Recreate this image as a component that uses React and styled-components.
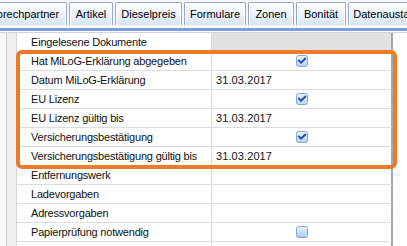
import React from "react";
import styled, { createGlobalStyle } from "styled-components";

const Global = createGlobalStyle`
  html, body { margin: 0; padding: 0; background: #ffffff; }
  body { font-family: "Liberation Sans", Arial, sans-serif; font-size: 11px; color: #111; }
`;

const tabs = [
  { label: "Ansprechpartner", width: 97 },
  { label: "Artikel", width: 44 },
  { label: "Dieselpreis", width: 67 },
  { label: "Formulare", width: 62 },
  { label: "Zonen", width: 46 },
  { label: "Bonität", width: 50 },
  { label: "Datenaustausch", width: 90 },
];

const rows = [
  { label: "Eingelesene Dokumente", kind: "head" },
  { label: "Hat MiLoG-Erklärung abgegeben", kind: "check", checked: true },
  { label: "Datum MiLoG-Erklärung", kind: "text", value: "31.03.2017" },
  { label: "EU Lizenz", kind: "check", checked: true },
  { label: "EU Lizenz gültig bis", kind: "text", value: "31.03.2017" },
  { label: "Versicherungsbestätigung", kind: "check", checked: true },
  { label: "Versicherungsbestätigung gültig bis", kind: "text", value: "31.03.2017" },
  { label: "Entfernungswerk", kind: "text", value: "" },
  { label: "Ladevorgaben", kind: "text", value: "" },
  { label: "Adressvorgaben", kind: "text", value: "" },
  { label: "Papierprüfung notwendig", kind: "check", checked: false },
  { label: "", kind: "text", value: "" },
];

export default function App() {
  return (
    <Page>
      <Global />
      <TabStrip>
        {tabs.map((t) => (
          <Tab key={t.label} $w={t.width}>
            {t.label}
          </Tab>
        ))}
      </TabStrip>
      <BlueBar />
      <Grid>
        {rows.map((r, i) => (
          <Row key={i}>
            <Gutter />
            <RowHeader />
            <LabelCell>{r.label}</LabelCell>
            <ValueCell $head={r.kind === "head"} $center={r.kind === "check"}>
              {r.kind === "check" && <CheckBox checked={r.checked} />}
              {r.kind === "text" && r.value}
            </ValueCell>
            <Rest />
          </Row>
        ))}
        <Highlight />
      </Grid>
    </Page>
  );
}

function CheckBox({ checked }) {
  const id = checked ? "cbOn" : "cbOff";
  return (
    <svg width="12" height="12" viewBox="0 0 12 12">
      <defs>
        <linearGradient id={id} x1="0" y1="0" x2="0" y2="1">
          <stop offset="0" stopColor={checked ? "#eef5fe" : "#e8f1fd"} />
          <stop offset="1" stopColor={checked ? "#b4d1f5" : "#a9caf3"} />
        </linearGradient>
      </defs>
      <rect x="0.5" y="0.5" width="11" height="11" rx="2" fill={`url(#${id})`} stroke="#7fa9e0" />
      {checked && (
        <path d="M3 5.6 L5 7.6 L9.2 3.6" fill="none" stroke="#1f4fa8" strokeWidth="2" strokeLinecap="square" />
      )}
    </svg>
  );
}

const Page = styled.div`
  width: 407px;
  height: 246px;
  overflow: hidden;
  background: #ffffff;
`;

const TabStrip = styled.div`
  display: flex;
  gap: 2px;
  height: 26px;
  padding-top: 2px;
  box-sizing: border-box;
  margin-left: -30px;
  background: #f5f6f8;
  white-space: nowrap;
`;

const Tab = styled.div`
  flex: 0 0 ${(p) => p.$w}px;
  height: 23px;
  box-sizing: border-box;
  display: flex;
  align-items: center;
  justify-content: center;
  border: 1px solid #97abc8;
  border-bottom: none;
  border-radius: 2px 2px 0 0;
  box-shadow: inset 1px 1px 0 #ffffff, inset -1px 0 0 #ffffff;
  background: linear-gradient(#fdfeff 0%, #eef4fc 45%, #d6e5f8 100%);
  color: #000;
  font-size: 11px;
  overflow: hidden;
`;

const BlueBar = styled.div`
  height: 3px;
  margin-top: 2px;
  background: #7d9ce0;
`;

const Grid = styled.div`
  position: relative;
  margin-top: 1px;
  border-top: 1px solid #d4d4d4;
`;

const Row = styled.div`
  display: grid;
  grid-template-columns: 7px 10px 195px 181px 1fr;
  height: 19px;
`;

const Gutter = styled.div`
  background: #f8f8f8;
  border-right: 1px solid #cfcfcf;
`;

const RowHeader = styled.div`
  background: #efefef;
  border-right: 1px solid #d6d6d6;
`;

const LabelCell = styled.div`
  display: flex;
  align-items: center;
  padding-left: 14px;
  border-right: 1px solid #dadada;
  border-bottom: 1px solid #dcdcdc;
  letter-spacing: -0.2px;
  white-space: nowrap;
  overflow: hidden;
`;

const ValueCell = styled.div`
  display: flex;
  align-items: center;
  justify-content: ${(p) => (p.$center ? "center" : "flex-start")};
  padding-left: ${(p) => (p.$center ? "0" : "4px")};
  background: ${(p) => (p.$head ? "#e1e1e1" : "#ffffff")};
  border-right: 2px solid #a6a6a6;
  border-bottom: 1px solid #dcdcdc;
  letter-spacing: 0.1px;
`;

const Rest = styled.div`
  background: #ffffff;
`;

const Highlight = styled.div`
  position: absolute;
  left: 16px;
  top: 17px;
  width: 381px;
  height: 119px;
  box-sizing: border-box;
  border: 4px solid #ec7b2b;
  border-radius: 6px;
  pointer-events: none;
`;
